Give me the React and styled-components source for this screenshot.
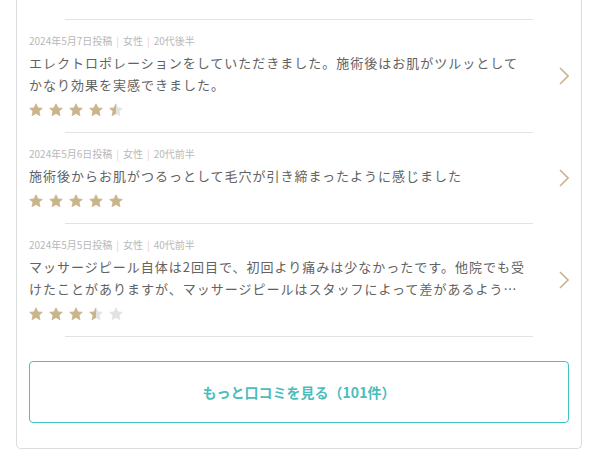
import { useId } from "react";
import styled, { createGlobalStyle } from "styled-components";

const GlobalStyle = createGlobalStyle`
  body {
    margin: 0;
    background: #fff;
    font-family: "Noto Sans CJK JP", "Noto Sans", sans-serif;
  }
`;

const Page = styled.div`
  padding: 0 11px 13px 16px;
`;

const Card = styled.section`
  border: 1px solid #dcdcdc;
  border-top: none;
  border-radius: 0 0 5px 5px;
  padding: 19px 12px 25px;
`;

const Divider = styled.hr`
  margin: 0 36px;
  border: none;
  border-top: 1px solid #e2e2e2;
`;

const ReviewRow = styled.div`
  display: flex;
  align-items: center;
  gap: 30px;
  padding: 14px 0 15px;
  cursor: pointer;
`;

const Content = styled.div`
  flex: 1;
  min-width: 0;
`;

const Meta = styled.div`
  font-size: 10px;
  line-height: 14px;
  color: #b8b8b8;
  span.sep {
    color: #f2c8c8;
    margin: 0 4px;
  }
`;

const Body = styled.p`
  margin: 4px 0 0;
  font-size: 13px;
  line-height: 22px;
  letter-spacing: 1px;
  color: #626262;
  display: -webkit-box;
  -webkit-line-clamp: 2;
  -webkit-box-orient: vertical;
  overflow: hidden;
`;

const Stars = styled.div`
  display: flex;
  gap: 6px;
  margin-top: 7px;
  height: 14px;
`;

const Chevron = styled.svg`
  flex-shrink: 0;
  width: 10px;
  height: 18px;
`;

const MoreButton = styled.button`
  display: block;
  width: 100%;
  height: 62px;
  margin-top: 24px;
  background: #fff;
  border: 1px solid #3fc3c1;
  border-radius: 4px;
  font-family: "Noto Sans CJK JP", "Noto Sans", sans-serif;
  font-size: 14px;
  font-weight: 700;
  color: #4bbdbd;
  cursor: pointer;
`;

const STAR = "M7 0.8 L8.9 4.9 L13.3 5.3 L10 8.3 L11 12.7 L7 10.4 L3 12.7 L4 8.3 L0.7 5.3 L5.1 4.9 Z";

const Star = ({ fill }) => {
  const id = useId();
  const on = "#c9b48b";
  const off = "#e2e2e2";
  if (fill === "half") {
    return (
      <svg width="14" height="14" viewBox="0 0 14 14">
        <defs>
          <linearGradient id={id}>
            <stop offset="50%" stopColor={on} />
            <stop offset="50%" stopColor={off} />
          </linearGradient>
        </defs>
        <path d={STAR} fill={`url(#${id})`} strokeLinejoin="round" stroke={`url(#${id})`} strokeWidth="0.8" />
      </svg>
    );
  }
  const c = fill === "full" ? on : off;
  return (
    <svg width="14" height="14" viewBox="0 0 14 14">
      <path d={STAR} fill={c} stroke={c} strokeWidth="0.8" strokeLinejoin="round" />
    </svg>
  );
};

const Rating = ({ value }) => (
  <Stars>
    {[1, 2, 3, 4, 5].map((n) => (
      <Star key={n} fill={value >= n ? "full" : value >= n - 0.5 ? "half" : "empty"} />
    ))}
  </Stars>
);

const reviews = [
  {
    date: "2024年5月7日投稿",
    gender: "女性",
    age: "20代後半",
    text: "エレクトロポレーションをしていただきました。施術後はお肌がツルッとしてかなり効果を実感できました。",
    rating: 4.5,
  },
  {
    date: "2024年5月6日投稿",
    gender: "女性",
    age: "20代前半",
    text: "施術後からお肌がつるっとして毛穴が引き締まったように感じました",
    rating: 5,
  },
  {
    date: "2024年5月5日投稿",
    gender: "女性",
    age: "40代前半",
    text: "マッサージピール自体は2回目で、初回より痛みは少なかったです。他院でも受けたことがありますが、マッサージピールはスタッフによって差があるように感じます。こちらは丁寧でした。",
    rating: 3.5,
  },
];

const App = () => {
  return (
    <Page>
      <GlobalStyle />
      <Card>
        {reviews.map((r) => (
          <div key={r.date}>
            <Divider />
            <ReviewRow>
              <Content>
                <Meta>
                  {r.date}
                  <span className="sep">|</span>
                  {r.gender}
                  <span className="sep">|</span>
                  {r.age}
                </Meta>
                <Body>{r.text}</Body>
                <Rating value={r.rating} />
              </Content>
              <Chevron viewBox="0 0 10 18">
                <path d="M1 1 L9 9 L1 17" fill="none" stroke="#c9b48b" strokeWidth="1.6" />
              </Chevron>
            </ReviewRow>
          </div>
        ))}
        <Divider />
        <MoreButton>もっと口コミを見る（101件）</MoreButton>
      </Card>
    </Page>
  );
};

export default App;
